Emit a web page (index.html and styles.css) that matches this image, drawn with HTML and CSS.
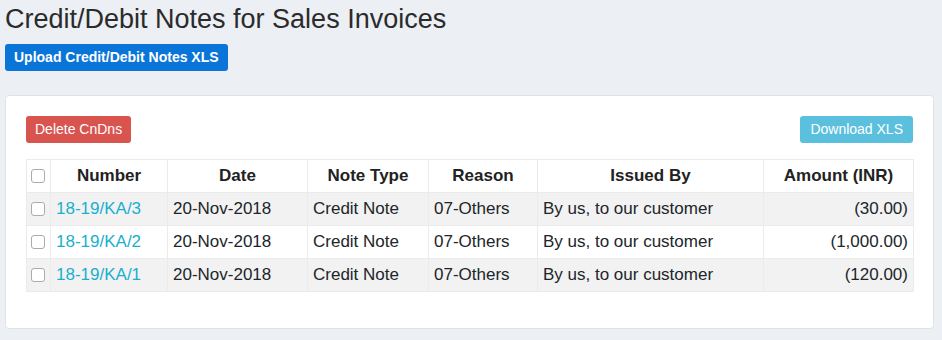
FILE: index.html
```html
<!DOCTYPE html>
<html lang="en">
<head>
  <meta charset="UTF-8" />
  <title>Credit/Debit Notes for Sales Invoices</title>
  <link rel="stylesheet" href="styles.css">
</head>
<body>
  <div class="page">
    <h1 class="title">Credit/Debit Notes for Sales Invoices</h1>
    <button class="btn btn-primary">Upload Credit/Debit Notes XLS</button>

    <div class="card">
      <div class="toolbar">
        <button class="btn btn-danger">Delete CnDns</button>
        <button class="btn btn-info">Download XLS</button>
      </div>

      <table class="notes">
        <colgroup>
          <col style="width: 24px">
          <col style="width: 117px">
          <col style="width: 140px">
          <col style="width: 121px">
          <col style="width: 109px">
          <col style="width: 226px">
          <col style="width: 150px">
        </colgroup>
        <thead>
          <tr>
            <th class="check"><input type="checkbox"></th>
            <th>Number</th>
            <th>Date</th>
            <th>Note Type</th>
            <th>Reason</th>
            <th>Issued By</th>
            <th>Amount (INR)</th>
          </tr>
        </thead>
        <tbody>
          <tr>
            <td class="check"><input type="checkbox"></td>
            <td><a href="#">18-19/KA/3</a></td>
            <td>20-Nov-2018</td>
            <td>Credit Note</td>
            <td>07-Others</td>
            <td>By us, to our customer</td>
            <td class="amount">(30.00)</td>
          </tr>
          <tr>
            <td class="check"><input type="checkbox"></td>
            <td><a href="#">18-19/KA/2</a></td>
            <td>20-Nov-2018</td>
            <td>Credit Note</td>
            <td>07-Others</td>
            <td>By us, to our customer</td>
            <td class="amount">(1,000.00)</td>
          </tr>
          <tr>
            <td class="check"><input type="checkbox"></td>
            <td><a href="#">18-19/KA/1</a></td>
            <td>20-Nov-2018</td>
            <td>Credit Note</td>
            <td>07-Others</td>
            <td>By us, to our customer</td>
            <td class="amount">(120.00)</td>
          </tr>
        </tbody>
      </table>
    </div>
  </div>
</body>
</html>
```

FILE: styles.css
```css
* {
  margin: 0;
  padding: 0;
  box-sizing: border-box;
}

html, body {
  background: #eceff4;
  font-family: "Liberation Sans", Arial, sans-serif;
  color: #212529;
}

.page {
  padding: 3px 8px 0 5px;
}

.title {
  font-size: 27px;
  font-weight: normal;
  line-height: 32px;
  color: #2b2b2b;
}

.btn {
  border: none;
  border-radius: 3px;
  color: white;
  font-family: inherit;
  font-size: 14px;
  line-height: 17px;
  padding: 5px 9px;
  cursor: pointer;
}

.btn-primary {
  background: #0a75d8;
  font-weight: bold;
  margin-top: 9px;
}

.btn-danger {
  background: #d9534f;
}

.btn-info {
  background: #5bc0de;
  padding: 5px 10px;
}

.card {
  margin-top: 24px;
  background: white;
  border: 1px solid #dfe2e7;
  border-radius: 4px;
  padding: 20px 20px 36px 20px;
}

.toolbar {
  display: flex;
  justify-content: space-between;
  align-items: center;
  margin-bottom: 16px;
}

.notes {
  width: 100%;
  table-layout: fixed;
  border-collapse: collapse;
  font-size: 17px;
}

.notes th,
.notes td {
  border: 1px solid #ebebeb;
  padding: 6px 5px;
  line-height: 20px;
  white-space: nowrap;
}

.notes th {
  font-weight: bold;
  text-align: center;
  color: #222;
}

.notes tbody tr:nth-child(odd) {
  background: #f2f2f2;
}

.notes td.amount {
  text-align: right;
}

.notes .check {
  padding-left: 4px;
  padding-right: 0;
  text-align: left;
}

.notes a {
  color: #1aafcf;
  text-decoration: none;
}

.notes input[type="checkbox"] {
  appearance: none;
  -webkit-appearance: none;
  width: 14px;
  height: 14px;
  border: 1px solid #ababab;
  border-radius: 3px;
  background: white;
  vertical-align: middle;
  position: relative;
  top: -1px;
}
```
